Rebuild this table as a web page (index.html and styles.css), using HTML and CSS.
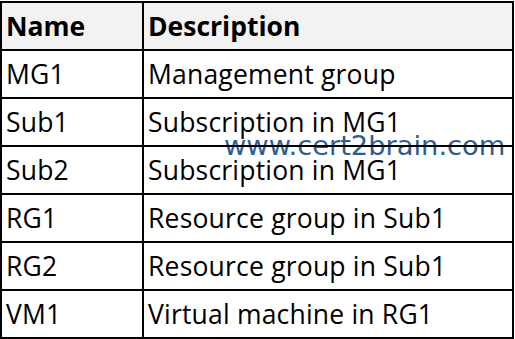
FILE: index.html
```html
<!DOCTYPE html>
<html>
<head>
<meta charset="utf-8">
<link rel="stylesheet" href="styles.css">
</head>
<body>
<table class="grid">
  <tr class="head"><th class="c1">Name</th><th>Description</th></tr>
  <tr><td class="c1">MG1</td><td>Management group</td></tr>
  <tr><td class="c1">Sub1</td><td>Subscription in MG1</td></tr>
  <tr><td class="c1">Sub2</td><td>Subscription in MG1</td></tr>
  <tr><td class="c1">RG1</td><td>Resource group in Sub1</td></tr>
  <tr><td class="c1">RG2</td><td>Resource group in Sub1</td></tr>
  <tr><td class="c1">VM1</td><td>Virtual machine in RG1</td></tr>
</table>
<div class="mark">www.cert2brain.com</div>
</body>
</html>
```
FILE: styles.css
```css
html { background: #fff; }
html, body { margin: 0; padding: 0; }
body { padding-top: 1px; position: relative; }
.grid {
  border-collapse: collapse;
  width: 514px;
  font-family: "Open Sans", "Lato", sans-serif;
  font-size: 26.5px;
  color: #000;
}
.grid th, .grid td {
  border: 2px solid #000;
  height: 46px;
  padding: 0 4px;
  text-align: left;
  vertical-align: middle;
  line-height: 1;
}
.grid td { letter-spacing: 0.2px; }
.grid th { font-weight: bold; background: #f2f2f2; }
.grid .c1 { width: 132px; }
.mark {
  position: absolute;
  z-index: -1;
  left: 224px;
  top: 132px;
  font-family: "DejaVu Sans", Verdana, sans-serif;
  font-size: 27.3px;
  color: #2e5d92;
  line-height: 1;
}
```
